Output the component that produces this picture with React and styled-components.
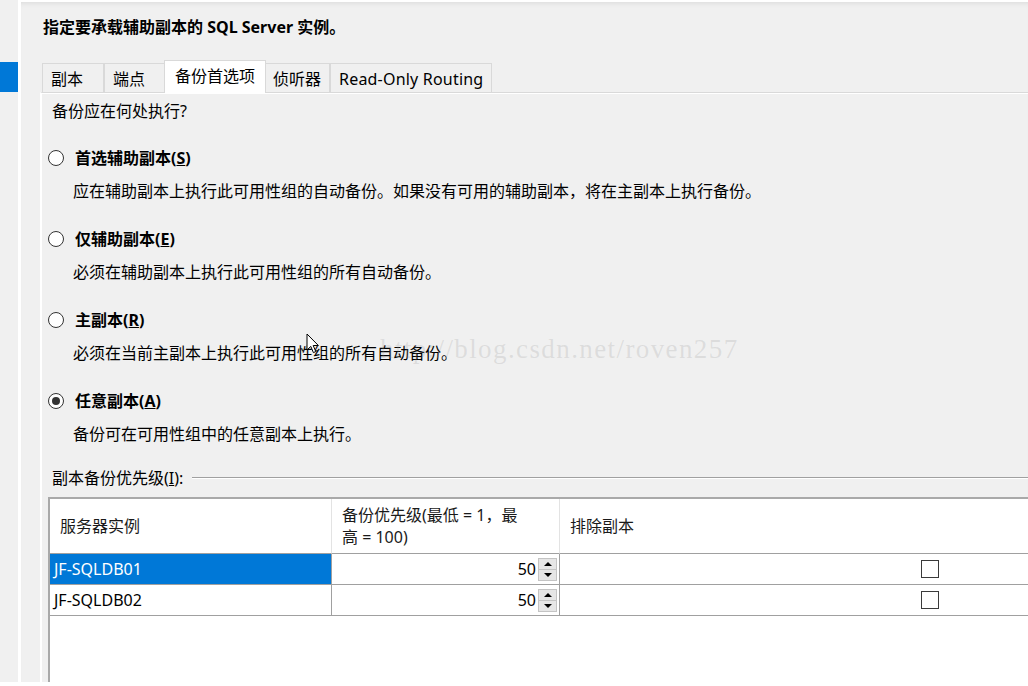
import React from "react";
import styled, { createGlobalStyle } from "styled-components";

const FONT = `"Segoe UI", "Noto Sans", "Noto Sans CJK SC", sans-serif`;

const Global = createGlobalStyle`
  html, body { margin: 0; padding: 0; background: #fff; }
  body { font-family: ${FONT}; color: #000; -webkit-font-smoothing: antialiased; }
  #root { width: 1028px; height: 686px; overflow: hidden; }
  * { box-sizing: border-box; }
`;

const Frame = styled.div`
  position: relative;
  display: flex;
  width: 1028px;
  height: 686px;
  background: #f0f0f0;
  border-bottom: 4px solid #fff;
  overflow: hidden;
`;

const Sidebar = styled.nav`
  width: 18px;
  flex: none;
  padding-top: 62px;
`;

const NavItem = styled.div`
  height: 30px;
  background: ${(p) => (p.$active ? "#0078d7" : "transparent")};
`;

const Splitter = styled.div`
  width: 3px;
  flex: none;
  background: #fff;
`;

const Main = styled.main`
  flex: 1;
  min-width: 0;
  display: flex;
  flex-direction: column;
  padding-left: 19px;
  border-top: 2px solid #fff;
  box-shadow: inset 0 5px 6px -5px rgba(0, 0, 0, 0.12);
`;

const Title = styled.h1`
  margin: 14px 0 0 3px;
  font-size: 16px;
  line-height: 22px;
  font-weight: 700;
`;

const TabStrip = styled.div`
  position: relative;
  z-index: 1;
  display: flex;
  align-items: flex-end;
  height: 32px;
  margin-top: 22px;
  padding-left: 2px;
`;

const Tab = styled.div`
  height: ${(p) => (p.$selected ? "33px" : "29px")};
  min-width: 62px;
  padding: 4px ${(p) => (p.$selected ? "10px" : "8px")} 0;
  margin: 0 ${(p) => (p.$selected ? "-2px" : "0")} ${(p) => (p.$selected ? "-1px" : "0")};
  position: relative;
  z-index: ${(p) => (p.$selected ? 2 : 1)};
  background: ${(p) => (p.$selected ? "#fff" : "#f0f0f0")};
  border: 1px solid #d9d9d9;
  border-bottom: none;
  font-size: 16px;
  line-height: 22px;
  letter-spacing: ${(p) => (p.$latin ? "0.2px" : "0")};
  white-space: nowrap;
`;

const Panel = styled.section`
  flex: 1;
  display: flex;
  flex-direction: column;
  border-top: 1px solid #d9d9d9;
  border-left: 2px solid #fff;
  box-shadow: inset 0 1px 0 #fff;
  padding: 7px 0 0 10px;
`;

const Text = styled.div`
  font-size: 16px;
  line-height: 22px;
  white-space: nowrap;
`;

const Question = styled(Text)`
  margin-bottom: -1px;
`;

const OptionRow = styled.label`
  display: flex;
  align-items: center;
  gap: 11px;
  height: 22px;
  margin: 26px 0 0 -4px;
  font-size: 16px;
  line-height: 22px;
  font-weight: 700;
  white-space: nowrap;
`;

const Radio = styled.span`
  position: relative;
  width: 16px;
  height: 16px;
  flex: none;
  border-radius: 50%;
  border: 1px solid #333;
  background: #fff;
  &::after {
    content: "";
    display: ${(p) => (p.$checked ? "block" : "none")};
    position: absolute;
    left: 3px;
    top: 3px;
    width: 8px;
    height: 8px;
    border-radius: 50%;
    background: #333;
  }
`;

const Desc = styled(Text)`
  margin-top: 11px;
  padding-left: 21px;
`;

const GroupHeader = styled.div`
  display: flex;
  align-items: center;
  gap: 9px;
  margin-top: 22px;
`;

const GroupRule = styled.div`
  flex: 1;
  height: 1px;
  margin-top: -1px;
  background: #a0a0a0;
  box-shadow: 0 1px 0 #fff;
`;

const Grid = styled.div`
  flex: 1;
  margin: 8px 0 0 -4px;
  background: #fff;
  border-left: 2px solid #a9a9a9;
  border-top: 2px solid #a9a9a9;
  display: grid;
  grid-template-columns: 282px 228px 740px;
  grid-auto-rows: min-content;
  align-content: start;
  width: 1260px;
`;

const HeadCell = styled.div`
  height: 55px;
  display: flex;
  align-items: center;
  padding: 0 10px;
  border-bottom: 1px solid #a0a0a0;
  border-right: 1px solid #e3e3e3;
  font-size: 16px;
  line-height: 22px;
  color: #1a1a1a;
`;

const Cell = styled.div`
  height: 31px;
  display: flex;
  align-items: center;
  justify-content: ${(p) => p.$justify || "flex-start"};
  padding: ${(p) => p.$pad || "0"};
  gap: 2px;
  border-bottom: 1px solid #a0a0a0;
  border-right: 1px solid #a0a0a0;
  background: ${(p) => (p.$selected ? "#0078d7" : "#fff")};
  color: ${(p) => (p.$selected ? "#fff" : "#000")};
  font-size: 16px;
  line-height: 22px;
  white-space: nowrap;
`;

const Spinner = styled.div`
  width: 19px;
  height: 23px;
  display: flex;
  flex-direction: column;
  border: 1px solid #c4c4c4;
  background: #e6e6e6;
`;

const SpinBtn = styled.div`
  flex: 1;
  display: flex;
  align-items: center;
  justify-content: center;
  & + & {
    border-top: 1px solid #c4c4c4;
  }
  &::before {
    content: "";
    width: 0;
    height: 0;
    border-left: 4px solid transparent;
    border-right: 4px solid transparent;
    ${(p) =>
      p.$up ? "border-bottom: 4px solid #000;" : "border-top: 4px solid #000;"}
  }
`;

const CheckBox = styled.span`
  width: 18px;
  height: 18px;
  border: 1.5px solid #3a3a3a;
  background: #fff;
`;

const Watermark = styled.div`
  position: absolute;
  left: 380px;
  top: 336px;
  font-family: "Liberation Serif", "DejaVu Serif", serif;
  font-size: 27px;
  line-height: 1;
  letter-spacing: 1.4px;
  color: rgba(150, 150, 150, 0.22);
  pointer-events: none;
  white-space: nowrap;
`;

const Cursor = styled.svg`
  position: absolute;
  left: 306px;
  top: 333px;
  pointer-events: none;
`;

const options = [
  {
    label: "首选辅助副本",
    key: "S",
    desc: "应在辅助副本上执行此可用性组的自动备份。如果没有可用的辅助副本，将在主副本上执行备份。",
  },
  { label: "仅辅助副本", key: "E", desc: "必须在辅助副本上执行此可用性组的所有自动备份。" },
  { label: "主副本", key: "R", desc: "必须在当前主副本上执行此可用性组的所有自动备份。" },
  { label: "任意副本", key: "A", desc: "备份可在可用性组中的任意副本上执行。", checked: true },
];

const tabs = ["副本", "端点", "备份首选项", "侦听器", "Read-Only Routing"];

const rows = [
  { name: "JF-SQLDB01", priority: 50, selected: true },
  { name: "JF-SQLDB02", priority: 50 },
];

export default function App() {
  return (
    <>
      <Global />
      <Frame>
        <Sidebar>
          <NavItem $active />
        </Sidebar>
        <Splitter />
        <Main>
          <Title>指定要承载辅助副本的 SQL Server 实例。</Title>
          <TabStrip>
            {tabs.map((t) => (
              <Tab key={t} $selected={t === "备份首选项"} $latin={t === "Read-Only Routing"}>
                {t}
              </Tab>
            ))}
          </TabStrip>
          <Panel>
            <Question>备份应在何处执行?</Question>
            {options.map((o) => (
              <React.Fragment key={o.key}>
                <OptionRow>
                  <Radio $checked={o.checked} />
                  <span>
                    {o.label}(<u>{o.key}</u>)
                  </span>
                </OptionRow>
                <Desc>{o.desc}</Desc>
              </React.Fragment>
            ))}
            <GroupHeader>
              <Text>
                副本备份优先级(<u>I</u>):
              </Text>
              <GroupRule />
            </GroupHeader>
            <Grid>
              <HeadCell>服务器实例</HeadCell>
              <HeadCell>
                <span>
                  备份优先级(最低 = 1，最
                  <br />高 = 100)
                </span>
              </HeadCell>
              <HeadCell>排除副本</HeadCell>
              {rows.map((r) => (
                <React.Fragment key={r.name}>
                  <Cell $selected={r.selected} $pad="0 0 0 4px">
                    {r.name}
                  </Cell>
                  <Cell $justify="flex-end" $pad="0 2px 0 0">
                    <span>{r.priority}</span>
                    <Spinner>
                      <SpinBtn $up />
                      <SpinBtn />
                    </Spinner>
                  </Cell>
                  <Cell $justify="center">
                    <CheckBox />
                  </Cell>
                </React.Fragment>
              ))}
            </Grid>
          </Panel>
        </Main>
        <Watermark>http://blog.csdn.net/roven257</Watermark>
        <Cursor width="14" height="22" viewBox="0 0 14 22">
          <path
            d="M1 1 L1 17 L4.8 13.4 L7.4 19.6 L9.8 18.6 L7.2 12.5 L12.4 12.5 Z"
            fill="#fff"
            stroke="#000"
            strokeWidth="1"
            strokeLinejoin="miter"
          />
        </Cursor>
      </Frame>
    </>
  );
}
